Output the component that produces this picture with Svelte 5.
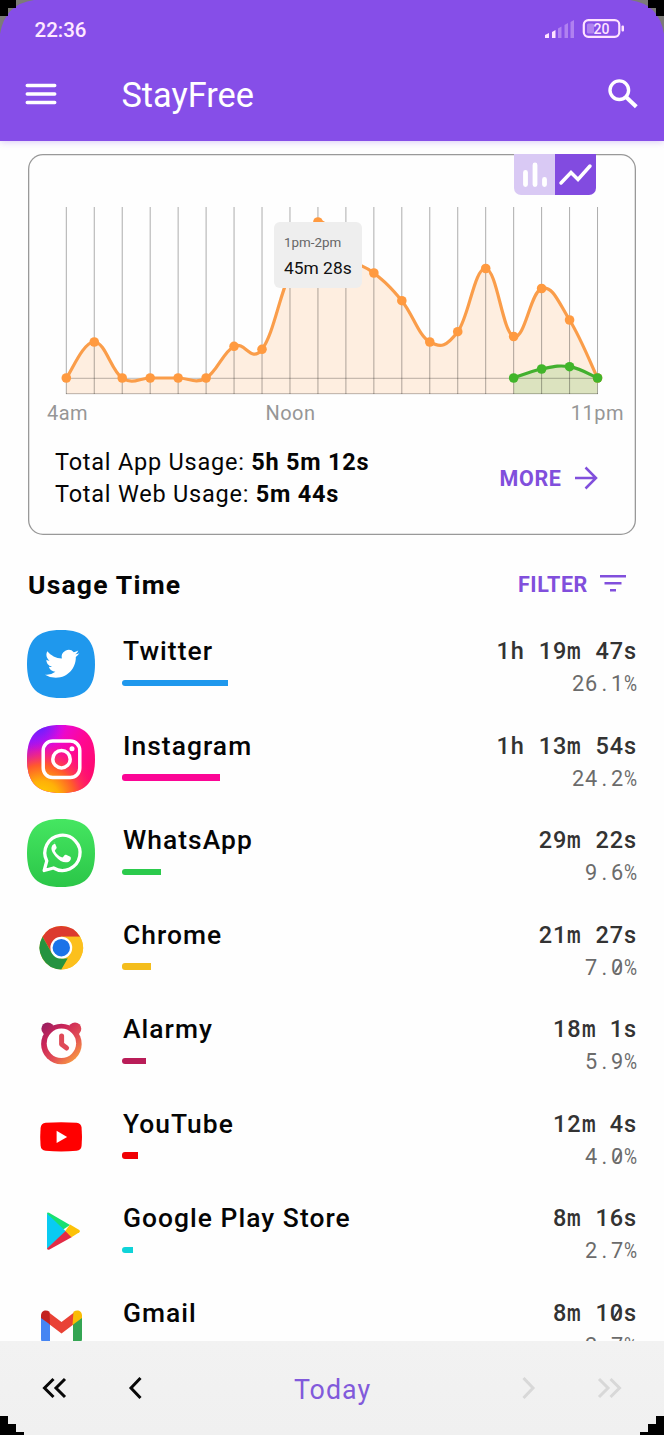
<script>
  const step = 27.96;
  const appY = [378, 342, 378, 378, 378, 378, 346.3, 349.3, 273, 222, 256, 273, 300.7, 342, 331.7, 268.5, 336.5, 288.5, 320, 378];
  const webY = [378, 369, 366.7, 378];
  const toPoints = (ys, first) => ys.map((y, i) => ({ x: 38.3 + (first + i) * step, y: y - 200 }));

  // Cubic smoothing: each control point follows its neighbours' slope.
  function smooth(p) {
    const k = 0.2;
    let d = `M${p[0].x} ${p[0].y}`;
    for (let i = 1; i < p.length; i++) {
      const before = p[Math.max(i - 2, 0)];
      const prev = p[i - 1];
      const cur = p[i];
      const next = p[Math.min(i + 1, p.length - 1)];
      d += `C${prev.x + (cur.x - before.x) * k} ${prev.y + (cur.y - before.y) * k} ${cur.x - (next.x - prev.x) * k} ${cur.y - (next.y - prev.y) * k} ${cur.x} ${cur.y}`;
    }
    return d;
  }
  const area = (p) => `${smooth(p)}V194H${p[0].x}Z`;
  const appPts = toPoints(appY, 0);
  const webPts = toPoints(webY, 16);

  const apps = [
    { id: 'twitter', name: 'Twitter', time: '1h 19m 47s', pct: '26.1%', w: 106, color: '#1f98ed' },
    { id: 'instagram', name: 'Instagram', time: '1h 13m 54s', pct: '24.2%', w: 98, color: '#fb0595' },
    { id: 'whatsapp', name: 'WhatsApp', time: '29m 22s', pct: '9.6%', w: 39, color: '#2bca4c' },
    { id: 'chrome', name: 'Chrome', time: '21m 27s', pct: '7.0%', w: 28.5, color: '#f4bd1c' },
    { id: 'alarmy', name: 'Alarmy', time: '18m 1s', pct: '5.9%', w: 24, color: '#b91d58' },
    { id: 'youtube', name: 'YouTube', time: '12m 4s', pct: '4.0%', w: 16, color: '#f00004' },
    { id: 'play', name: 'Google Play Store', time: '8m 16s', pct: '2.7%', w: 11, color: '#0fd3d8' },
    { id: 'gmail', name: 'Gmail', time: '8m 10s', pct: '2.7%', w: 11, color: '#e94235' }
  ];
  const squircle = 'M34 0C58 0 68 10 68 34S58 68 34 68 0 58 0 34 10 0 34 0Z';
</script>

{#snippet mono(text)}{#each text.split(/([m%.0])/) as part}{#if part === 'm'}<span class="em">m</span>{:else if part === '%'}<span class="per">%</span>{:else if part === '.'}<span class="dot">.</span>{:else if part === '0'}<span class="zero">0</span>{:else}{part}{/if}{/each}{/snippet}

<div class="screen">
  <header>
    <div class="status">
      <span>22:36</span>
      <svg width="84" height="22" viewBox="0 0 84 22">
        <g fill="#ffe3ff">
          <path d="M1 19v-3l4-2v5zM8 19v-6l3.500-2v8z" />
          <path d="M14 19V9.500l3.500-2V19zM20.500 19V6l3.500-2v15zM26.500 19V3l3.500-2v18z" opacity=".35" />
        </g>
        <rect x="39.800" y="1.200" width="35.500" height="16.600" rx="4.500" fill="none" stroke="#ffe3ff" stroke-width="2.200" />
        <rect x="43" y="4.500" width="7" height="10" rx="1.500" fill="#ffe3ff" opacity=".35" />
        <rect x="77.500" y="6.500" width="2.500" height="6" rx="1" fill="#ffe3ff" />
        <text x="57.500" y="14.500" text-anchor="middle" fill="#ffe3ff" font-family="Roboto, sans-serif" font-size="14" font-weight="500">20</text>
      </svg>
    </div>
    <div class="appbar">
      <svg width="32" height="24" viewBox="0 0 32 24"><path d="M2.200 3.500h27.600M2.200 12h27.600M2.200 20.500h27.600" stroke="#fff" stroke-width="3.300" stroke-linecap="round" /></svg>
      <h1>StayFree</h1>
      <svg width="32" height="32" viewBox="0 0 32 32" fill="none" stroke="#fff"><circle cx="12.300" cy="12.200" r="9.300" stroke-width="3.400" /><path d="M18.500 18.500l10.800 10.300" stroke-width="4" /></svg>
    </div>
  </header>

  <main>
    <section class="card">
      <div class="toggle">
        <svg class="off" width="41" height="41" viewBox="0 0 41 41"><path d="M11.500 18.500v12M21 11v19.500M30.500 25.500v5" stroke="#fff" stroke-width="4.800" stroke-linecap="round" /></svg>
        <svg class="on" width="41" height="41" viewBox="0 0 41 41"><path d="M6 29l10-10.500 7 7L35 12" fill="none" stroke="#fff" stroke-width="3.500" stroke-linecap="round" /></svg>
      </div>
      <div class="chart">
        <svg width="608" height="200" viewBox="0 0 608 200">
          <path d={area(appPts)} fill="#ff9c43" opacity=".16" />
          <path d={area(webPts)} fill="#44b22e" opacity=".18" />
          {#each appPts as p}
            <path d={`M${p.x} 7V194`} stroke="#000" stroke-opacity=".32" />
          {/each}
          <path d="M38 178.300H570M38 193.700H570" stroke="#000" stroke-opacity=".27" />
          <path d={smooth(appPts)} fill="none" stroke="#fa9d4a" stroke-width="3.200" />
          {#each appPts as p}<circle cx={p.x} cy={p.y} r="4.800" fill="#ff9a40" />{/each}
          <path d={smooth(webPts)} fill="none" stroke="#43b02f" stroke-width="3.200" />
          {#each webPts as p}<circle cx={p.x} cy={p.y} r="4.800" fill="#41b52a" />{/each}
        </svg>
        <div class="tip"><span>1pm-2pm</span><strong>45m 28s</strong></div>
      </div>
      <div class="axis"><span>4am</span><span>Noon</span><span>11pm</span></div>
      <div class="totals">
        <div>
          <p>Total App Usage: <b>5h 5m 12s</b></p>
          <p>Total Web Usage: <b>5m 44s</b></p>
        </div>
        <button class="more">MORE
          <svg width="24" height="24" viewBox="0 0 24 24" fill="none" stroke="#814fdc" stroke-width="2.500"><path d="M1 12h21M11.500 1.500L22 12 11.500 22.500" /></svg>
        </button>
      </div>
    </section>

    <div class="heading">
      <h2>Usage Time</h2>
      <button class="filter">FILTER
        <svg width="26" height="18" viewBox="0 0 26 18" stroke="#814fdc" stroke-width="2.600"><path d="M0 1.300h26M4.500 8.300h17M10 15.200h6" /></svg>
      </button>
    </div>

    <ul>
      {#each apps as app}
        <li>
          <svg class="icon" width="68" height="68" viewBox="0 0 68 68">
            {#if app.id === 'twitter'}
              <path d={squircle} fill="#1f98ed" />
              <g transform="translate(18 16.700) scale(1.430)"><path fill="#fff" d="M23.950 4.570a10 10 0 0 1-2.820.770 4.960 4.960 0 0 0 2.160-2.720c-.950.550-2 .950-3.130 1.180a4.920 4.920 0 0 0-8.380 4.480C7.690 8.090 4.070 6.130 1.640 3.160a4.820 4.820 0 0 0-.670 2.480c0 1.710.870 3.210 2.190 4.100a4.900 4.900 0 0 1-2.230-.620v.060a4.920 4.920 0 0 0 3.950 4.830 5 5 0 0 1-2.210.080 4.940 4.940 0 0 0 4.600 3.420A9.870 9.870 0 0 1 0 19.540a14 14 0 0 0 7.550 2.210c9.050 0 14-7.500 14-13.980 0-.210 0-.420-.020-.630a9.940 9.940 0 0 0 2.460-2.550z" /></g>
            {:else if app.id === 'instagram'}
              <defs>
                <linearGradient id="ig-base" x1="0" y1=".1" x2="1" y2=".7"><stop stop-color="#8a18ff" /><stop offset=".35" stop-color="#e808d8" /><stop offset=".65" stop-color="#ff0894" /><stop offset="1" stop-color="#ff0a6c" /></linearGradient>
                <radialGradient id="ig-warm" cx=".22" cy="1.080" r=".85"><stop stop-color="#ffd500" /><stop offset=".3" stop-color="#ffb008" /><stop offset=".58" stop-color="#ff5a2c" /><stop offset="1" stop-color="#ff0a80" stop-opacity="0" /></radialGradient>
                <radialGradient id="ig-cool" cx=".18" cy="0" r=".4"><stop stop-color="#5a25ff" /><stop offset="1" stop-color="#9a14ff" stop-opacity="0" /></radialGradient>
              </defs>
              <path d={squircle} fill="url(#ig-base)" /><path d={squircle} fill="url(#ig-warm)" /><path d={squircle} fill="url(#ig-cool)" />
              <g fill="none" stroke="#fff" stroke-width="3.500"><rect x="16.200" y="15.900" width="36.600" height="36.600" rx="9.500" /><circle cx="34.500" cy="34.200" r="8.700" /></g>
              <circle cx="45" cy="23.700" r="2.500" fill="#fff" />
            {:else if app.id === 'whatsapp'}
              <defs><linearGradient id="wa" x2="0" y2="1"><stop stop-color="#45e661" /><stop offset="1" stop-color="#2bc648" /></linearGradient></defs>
              <path d={squircle} fill="url(#wa)" />
              <path d="M17.200 51.500l2.600-9.600A17.600 17.600 0 1 1 26.500 49z" fill="none" stroke="#fff" stroke-width="3.300" stroke-linejoin="round" />
              <path d="M28 24.500c-1-.300-2.300.200-3.200 1.800-1.600 3-.300 6.300 3.400 10.600 4 4.600 8.400 6.600 11.800 5.800 2.300-.600 3.700-2.300 3.600-4.300 0-.600-.500-1-1.100-1.300l-3.700-1.800c-.700-.300-1.200-.100-1.600.400l-1.400 1.800c-.400.500-.900.500-1.500.300-3-1.300-5.200-3.300-6.600-6-.300-.500-.200-.900.200-1.400l1.200-1.500c.300-.400.300-.800.100-1.300l-1.600-3.800c-.200-.500-.600-.800-1.200-.800z" fill="#fff" transform="translate(.300 .500)" />
            {:else if app.id === 'chrome'}
              <g transform="translate(34.300 33.700)">
                <circle r="21.700" fill="#fcc01d" />
                <path d="M-18.800-10.850A21.700 21.700 0 0 1 18.800-10.850H0L-9.400 5.400z" fill="#dc3a2e" />
                <path d="M-18.800-10.850L-9.400 5.430 0 10.850H9.400L0 21.700A21.700 21.700 0 0 1-18.800-10.850z" fill="#25933f" />
                <path d="M9.400 5.430L0 21.700A21.700 21.700 0 0 0 18.800-10.850H0z" fill="#fcc01d" />
                <circle r="10.900" fill="#fff" /><circle r="8.700" fill="#1b73e8" />
              </g>
            {:else if app.id === 'alarmy'}
              <defs><linearGradient id="al" gradientUnits="userSpaceOnUse" x1="17" y1="17" x2="50" y2="53"><stop stop-color="#9c1f60" /><stop offset=".3" stop-color="#cb2558" /><stop offset=".65" stop-color="#e35055" /><stop offset="1" stop-color="#f9a03e" /></linearGradient></defs>
              <g fill="url(#al)"><circle cx="20.700" cy="20.800" r="6.300" /><circle cx="48" cy="20.800" r="6.300" /><circle cx="34.400" cy="36" r="20.300" /></g>
              <circle cx="34.400" cy="35.300" r="14.700" fill="#fff" />
              <path d="M34.600 28v8.300l5 3.800" fill="none" stroke="#df4a58" stroke-width="5" stroke-linecap="round" stroke-linejoin="round" />
            {:else if app.id === 'youtube'}
              <g transform="translate(-.400 -.700)">
                <path d="M19 20.500q15.500-1.200 31 0 4.500.4 5 5 .8 9 0 18-.5 4.600-5 5-15.500 1.200-31 0-4.500-.4-5-5-.8-9 0-18 .5-4.600 5-5z" fill="#f00" />
                <path d="M30 28.400v12.400l10.500-6.200z" fill="#fff" />
              </g>
            {:else if app.id === 'play'}
              <path d="M20 17q0-2 2-1.200L43 28 31 36z" fill="#18e070" />
              <path d="M20 16.500L39 34.500 20 52z" fill="#09cbf2" />
              <path d="M20 51.500l18.800-17.700L45 40 22.500 52.500q-2 .8-2.500-1z" fill="#e22b45" />
              <path d="M43 27.500l9.300 5.400q1.400 1.200 0 2.400L44.500 40.300 38.300 34z" fill="#fcc108" />
            {:else}
              <g transform="translate(0 -1)">
                <path d="M14 24v24q0 3.500 3.500 3.500H23V28z" fill="#4585f3" />
                <path d="M55 24v24q0 3.500-3.500 3.500H46V28z" fill="#34a553" />
                <path d="M22 21.500L34.500 31 47 21.500V33L34.500 42.500 22 33z" fill="#e94235" />
                <path d="M14 24.500c0-5 5-6.500 8.500-3.700L23 33.500 14 27z" fill="#c32220" />
                <path d="M55 24.500c0-5-5-6.500-8.500-3.700L45.500 34 55 27z" fill="#fabc05" />
              </g>
            {/if}
          </svg>
          <div class="info">
            <span class="name">{app.name}</span>
            <span class="bar" style={`width:${app.w}px;background:${app.color}`}></span>
          </div>
          <div class="stats">
            <span class="time">{@render mono(app.time)}</span>
            <span class="pct">{@render mono(app.pct)}</span>
          </div>
        </li>
      {/each}
    </ul>
  </main>

  <footer>
    <svg width="26" height="24" viewBox="0 0 26 24"><path d="M12.500 3L3.500 12l9 9M24 3l-9 9 9 9" /></svg>
    <svg width="16" height="24" viewBox="0 0 16 24"><path d="M13.500 2L4 12l9.500 10" /></svg>
    <span>Today</span>
    <svg class="dim" width="16" height="24" viewBox="0 0 16 24"><path d="M2.500 2L12 12 2.500 22" /></svg>
    <svg class="dim" width="26" height="24" viewBox="0 0 26 24"><path d="M2 3l9 9-9 9M13.500 3l9 9-9 9" /></svg>
  </footer>

  <svg class="corners" width="664" height="1435" viewBox="0 0 664 1435">
    <path d="M0 0H34Q5 4 0 34ZM664 0H630Q659 4 664 34Z" fill="#7c7b78" />
    <path d="M0 0H16V8H8V16H0ZM664 0H648V8H656V16H664ZM0 1416H8V1424H16V1432H24V1435H0ZM664 1416H656V1424H648V1432H640V1435H664Z" fill="#000" />
  </svg>
</div>

<style>
  :global(body) { margin: 0; background: #fff; }
  .screen { position: relative; width: 664px; height: 1435px; overflow: hidden; display: flex; flex-direction: column; font-family: Roboto, sans-serif; color: #050505; background: #fefefe; }
  h1, h2, p, ul { margin: 0; padding: 0; }
  svg { display: block; flex: none; }
  button { border: 0; background: none; padding: 0; display: flex; align-items: center; font: 700 21.500px Roboto, sans-serif; color: #814fdc; }

  header { flex: none; height: 140.500px; background: #864ee8; color: #fff; box-shadow: 0 1px 7px rgba(134, 78, 232, .3); }
  .status { height: 58px; padding: 1px 36px 0 34.500px; display: flex; justify-content: space-between; align-items: center; box-sizing: border-box; color: #ffe9ff; font-size: 20.500px; font-weight: 500; }
  .status svg { margin-top: 1px; }
  .appbar { height: 74px; padding: 0 25.500px 0 25px; display: flex; align-items: center; }
  .appbar svg { margin-top: -2px; }
  h1 { flex: 1; margin-left: 64.500px; font-size: 34.300px; font-weight: 400; line-height: 40px; }

  main { flex: 1; min-height: 0; overflow: hidden; padding: 13.500px 28px 0; }
  .card { box-sizing: border-box; width: 608px; height: 381px; border-radius: 15px; box-shadow: inset 0 0 0 1.300px #999; }
  .toggle { display: flex; justify-content: flex-end; padding-right: 40px; height: 41px; }
  .off { background: #d9c9f4; border-radius: 0 0 0 7px; }
  .on { background: #824be0; border-radius: 0 0 7px 0; }
  .chart { position: relative; height: 200px; margin-top: 5px; }
  .tip { position: absolute; left: 246px; top: 22px; width: 88px; height: 66px; box-sizing: border-box; padding: 12px 0 0 10px; border-radius: 6px; background: #eee; display: flex; flex-direction: column; }
  .tip span { font-size: 13.400px; line-height: 18px; color: #666; }
  .tip strong { font-size: 17.400px; line-height: 24px; margin-top: 4px; font-weight: 400; color: #111; }
  .axis { display: grid; grid-template-columns: 1fr 1fr 1fr; padding: 1px 12px 0 19px; font-size: 20px; line-height: 24px; letter-spacing: .500px; color: #969696; }
  .axis span:nth-child(2) { text-align: center; margin-left: -90px; }
  .axis span:nth-child(3) { text-align: right; }
  .totals { display: flex; justify-content: space-between; align-items: center; padding: 21px 38.500px 0 27px; font-size: 23.500px; line-height: 32px; letter-spacing: .770px; }
  .more { letter-spacing: .600px; gap: 12px; }
  .heading { display: flex; justify-content: space-between; align-items: center; height: 40px; margin-top: 29px; padding-right: 10px; }
  h2 { font-size: 26.500px; font-weight: 700; letter-spacing: 1.200px; }
  .filter { letter-spacing: .600px; gap: 12px; }

  ul { list-style: none; margin-top: 13px; }
  li { display: flex; align-items: center; height: 94.500px; margin-left: -1px; }
  .info { flex: 1; margin-left: 27px; height: 68px; }
  .name { display: block; margin-left: 1px; margin-top: 4px; font-size: 26.400px; line-height: 34px; font-weight: 500; letter-spacing: 1.040px; }
  .bar { display: block; height: 6.500px; margin-top: 11.300px; border-radius: 3px 0 0 3px; }
  .stats { height: 68px; display: flex; flex-direction: column; align-items: flex-end; white-space: pre; margin-right: -1px; }
  .time { margin-top: 4px; font-size: 23.500px; line-height: 34px; font-weight: 500; color: #333; letter-spacing: .900px; word-spacing: 7.400px; }
  .pct { font-size: 21.700px; line-height: 31px; color: #6b6b6b; letter-spacing: .830px; }
  .em, .per, .dot { display: inline-block; letter-spacing: 0; transform-origin: left; }
  .em { width: .876em; margin-right: -.276em; transform: scaleX(.67); font-weight: 700; }
  .per { width: .730em; margin-right: -.130em; transform: scaleX(.820); }
  .dot { width: .600em; text-align: center; }
  .zero { background: linear-gradient(to bottom right, transparent 0 0) no-repeat; position: relative; }
  .zero::after { content: ""; position: absolute; left: .275em; top: .350em; width: .075em; height: .520em; background: currentColor; transform: rotate(32deg); }

  footer { flex: none; height: 94px; background: linear-gradient(#f2f2f2, #f0f0f0); display: flex; align-items: center; padding: 0 41px; box-sizing: border-box; }
  footer svg { fill: none; stroke: #080808; stroke-width: 3px; }
  footer svg:nth-of-type(2) { margin-left: 60px; }
  footer .dim { stroke: #d8d8d8; }
  footer .dim:last-child { margin-left: 60px; }
  footer span { flex: 1; text-align: center; font-size: 26.800px; line-height: 34px; letter-spacing: 1px; margin-top: 3px; margin-left: 1px; color: #815adb; }
  .corners { position: absolute; left: 0; top: 0; pointer-events: none; }
</style>
